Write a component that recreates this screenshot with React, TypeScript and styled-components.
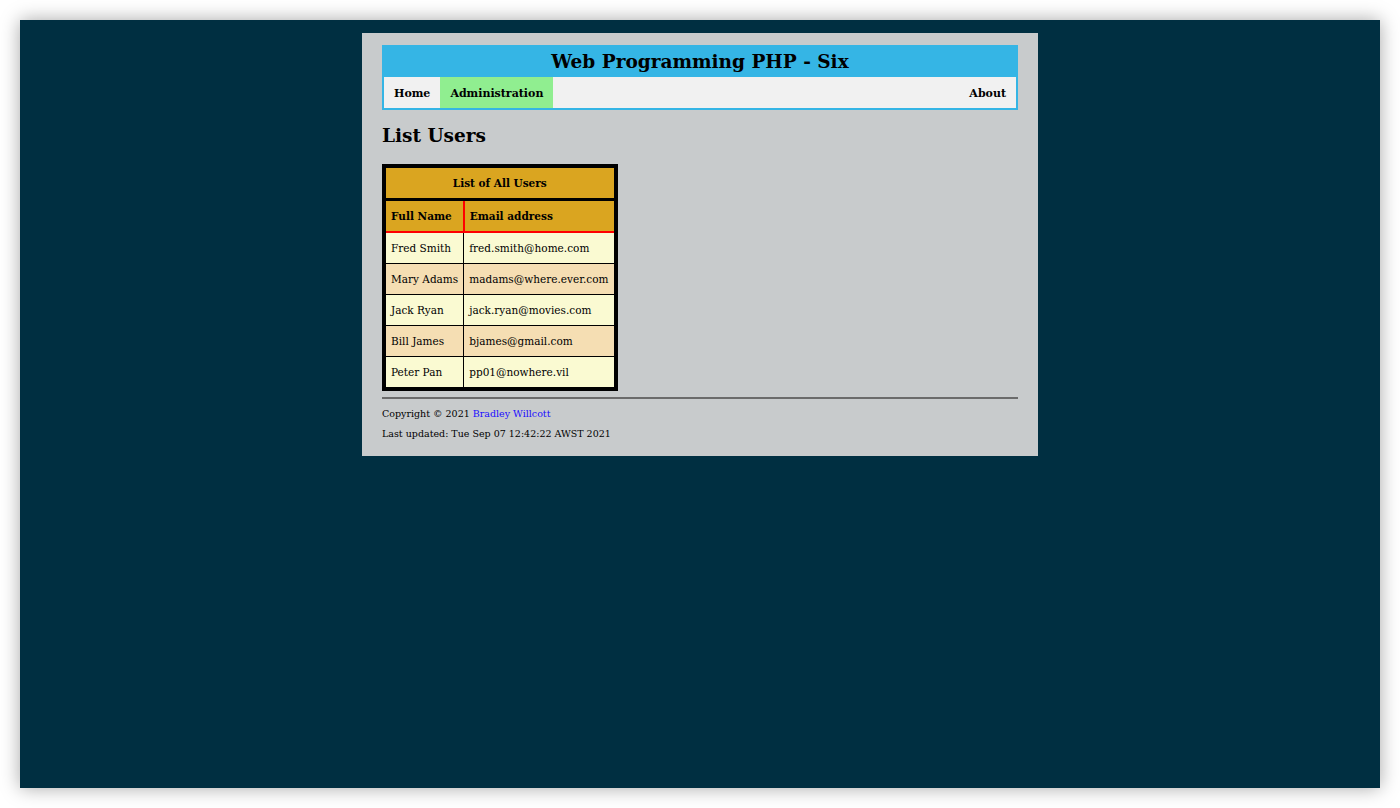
import styled, { createGlobalStyle } from "styled-components";

const GlobalStyle = createGlobalStyle`
  html, body {
    margin: 0;
    padding: 0;
    background: #ffffff;
  }
`;

const Frame = styled.div`
  margin: 20px;
  height: 768px;
  background: #002f41;
  box-shadow: 0 0 18px rgba(0, 0, 0, 0.35);
  padding-top: 13px;
  box-sizing: border-box;
  overflow: hidden;
`;

const Panel = styled.div`
  width: 676px;
  margin: 0 auto;
  background: #c8cbcc;
  padding: 12px 20px 12px;
  box-sizing: border-box;
  font-family: "DejaVu Serif", Georgia, serif;
  color: #000;
`;

const Header = styled.header`
  background: #35b5e5;
`;

const Title = styled.h1`
  margin: 0;
  height: 32px;
  padding-top: 1px;
  box-sizing: border-box;
  line-height: 32px;
  text-align: center;
  font-size: 18.5px;
  font-weight: bold;
`;

const Nav = styled.nav`
  display: flex;
  height: 31px;
  background: #f1f1f1;
  border: 2px solid #35b5e5;
  border-top: none;
`;

const NavItem = styled.a<{ $active?: boolean; $right?: boolean }>`
  display: flex;
  align-items: center;
  padding: 1px 10px 0;
  font-size: 11px;
  font-weight: bold;
  color: #000;
  text-decoration: none;
  background: ${(p) => (p.$active ? "#90ee90" : "transparent")};
  margin-left: ${(p) => (p.$right ? "auto" : "0")};
`;

const PageTitle = styled.h2`
  margin: 14px 0 0;
  height: 40px;
  font-size: 18.5px;
  line-height: 24px;
  font-weight: bold;
`;

const Table = styled.table`
  border-collapse: collapse;
  border: 4px solid #000;
  font-size: 10.5px;
`;

const CaptionCell = styled.th`
  background: #daa520;
  height: 30px;
  padding: 0;
  text-align: center;
  border-bottom: 3px solid #000;
`;

const HeadCell = styled.th<{ $divider?: boolean }>`
  background: #daa520;
  height: 30px;
  padding: 0 6px 0 5px;
  text-align: left;
  border-bottom: 2px solid #ff0000;
  border-right: ${(p) => (p.$divider ? "2px solid #ff0000" : "none")};
`;

const Row = styled.tr<{ $even?: boolean }>`
  background: ${(p) => (p.$even ? "#f5deb3" : "#fafad2")};
`;

const Cell = styled.td`
  height: 30px;
  padding: 0 5px;
  border: 1px solid #000;
  white-space: nowrap;
`;

const Rule = styled.hr`
  margin: 6px 0 0;
  border: none;
  border-top: 2px solid #6b6b6b;
  height: 0;
`;

const Footer = styled.footer`
  font-size: 9.5px;
  padding-top: 5px;
`;

const FooterLine = styled.p`
  margin: 0;
  line-height: 20px;
`;

const Link = styled.a`
  color: #1a0dff;
  text-decoration: none;
`;

const users = [
  ["Fred Smith", "fred.smith@home.com"],
  ["Mary Adams", "madams@where.ever.com"],
  ["Jack Ryan", "jack.ryan@movies.com"],
  ["Bill James", "bjames@gmail.com"],
  ["Peter Pan", "pp01@nowhere.vil"],
];

export default function App() {
  return (
    <>
      <GlobalStyle />
      <Frame>
        <Panel>
          <Header>
            <Title>Web Programming PHP - Six</Title>
            <Nav>
              <NavItem href="#">Home</NavItem>
              <NavItem href="#" $active>
                Administration
              </NavItem>
              <NavItem href="#" $right>
                About
              </NavItem>
            </Nav>
          </Header>
          <PageTitle>List Users</PageTitle>
          <Table>
            <thead>
              <tr>
                <CaptionCell colSpan={2}>List of All Users</CaptionCell>
              </tr>
              <tr>
                <HeadCell $divider>Full Name</HeadCell>
                <HeadCell>Email address</HeadCell>
              </tr>
            </thead>
            <tbody>
              {users.map(([name, email], i) => (
                <Row key={email} $even={i % 2 === 1}>
                  <Cell>{name}</Cell>
                  <Cell>{email}</Cell>
                </Row>
              ))}
            </tbody>
          </Table>
          <Rule />
          <Footer>
            <FooterLine>
              Copyright © 2021 <Link href="#">Bradley Willcott</Link>
            </FooterLine>
            <FooterLine>Last updated: Tue Sep 07 12:42:22 AWST 2021</FooterLine>
          </Footer>
        </Panel>
      </Frame>
    </>
  );
}
